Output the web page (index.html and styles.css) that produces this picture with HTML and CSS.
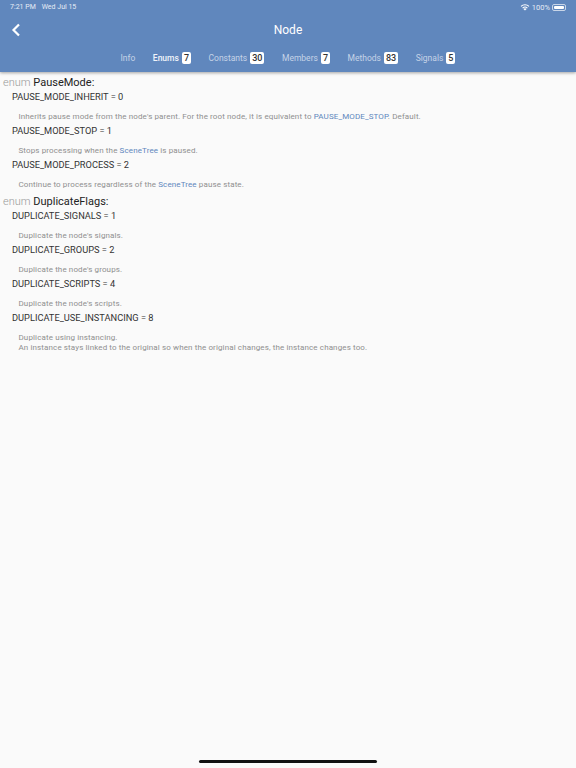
FILE: index.html
```html
<!DOCTYPE html>
<html lang="en">
<head>
	<meta charset="UTF-8">
	<title>Node</title>
	<link rel="stylesheet" href="styles.css">
</head>
<body>

<div id="outer">
	<div class="header">
		<div class="status">
			<span class="time">7:21 PM</span>
			<span class="date">Wed Jul 15</span>
			<span class="status-right">
				<svg class="wifi" width="10" height="8" viewBox="0 0 10 8">
					<path d="M5 7.6 3.4 5.9a2.3 2.3 0 0 1 3.2 0z" fill="#fff"/>
					<path d="M2.6 5.1a3.5 3.5 0 0 1 4.8 0" fill="none" stroke="#fff" stroke-width="1.1"/>
					<path d="M1 3.4a5.8 5.8 0 0 1 8 0" fill="none" stroke="#fff" stroke-width="1.1"/>
				</svg>
				<span>100%</span>
				<span class="battery"><span class="battery-fill"></span></span>
			</span>
		</div>
		<div class="title-row">
			<svg class="back" width="10" height="14" viewBox="0 0 10 14">
				<path d="M8 1.5 2.5 7 8 12.5" fill="none" stroke="#fff" stroke-width="2.2"/>
			</svg>
			<span class="title">Node</span>
		</div>
		<div class="tabs">
			<span class="tab">Info</span>
			<span class="tab active">Enums <b class="count">7</b></span>
			<span class="tab">Constants <b class="count">30</b></span>
			<span class="tab">Members <b class="count">7</b></span>
			<span class="tab">Methods <b class="count">83</b></span>
			<span class="tab">Signals <b class="count">5</b></span>
		</div>
	</div>

	<div class="content">
		<h2 class="enum"><span class="kw">enum</span> PauseMode:</h2>
		<div class="item">
			<div class="name">PAUSE_MODE_INHERIT = 0</div>
			<p class="desc">Inherits pause mode from the node's parent. For the root node, it is equivalent to <a href="#">PAUSE_MODE_STOP</a>. Default.</p>
		</div>
		<div class="item">
			<div class="name">PAUSE_MODE_STOP = 1</div>
			<p class="desc">Stops processing when the <a href="#">SceneTree</a> is paused.</p>
		</div>
		<div class="item">
			<div class="name">PAUSE_MODE_PROCESS = 2</div>
			<p class="desc">Continue to process regardless of the <a href="#">SceneTree</a> pause state.</p>
		</div>

		<h2 class="enum second"><span class="kw">enum</span> DuplicateFlags:</h2>
		<div class="item">
			<div class="name">DUPLICATE_SIGNALS = 1</div>
			<p class="desc">Duplicate the node's signals.</p>
		</div>
		<div class="item">
			<div class="name">DUPLICATE_GROUPS = 2</div>
			<p class="desc">Duplicate the node's groups.</p>
		</div>
		<div class="item">
			<div class="name">DUPLICATE_SCRIPTS = 4</div>
			<p class="desc">Duplicate the node's scripts.</p>
		</div>
		<div class="item">
			<div class="name">DUPLICATE_USE_INSTANCING = 8</div>
			<p class="desc">Duplicate using instancing.<br>An instance stays linked to the original so when the original changes, the instance changes too.</p>
		</div>
	</div>

	<div class="home-bar"></div>
</div>

</body>
</html>
```

FILE: styles.css
```css
*{
	margin: 0;
	padding: 0;
	box-sizing: border-box;
}
body{
	font-family: Roboto, "Liberation Sans", sans-serif;
	background-color: #fafafa;
}
#outer{
	width: 576px;
	height: 768px;
	display: flex;
	flex-direction: column;
	overflow: hidden;
}

.header{
	height: 72px;
	background-color: #6087bd;
	color: #fff;
	box-shadow: 0 1px 3px rgba(0,0,0,0.35);
	flex-shrink: 0;
}
.status{
	height: 14px;
	padding: 0 10px 0 10px;
	display: flex;
	align-items: center;
	font-size: 7px;
	color: #e6ecf5;
}
.date{
	margin-left: 6px;
}
.status-right{
	margin-left: auto;
	display: flex;
	align-items: center;
	gap: 2px;
	font-size: 7.5px;
}
.battery{
	width: 14px;
	height: 7px;
	padding: 1px;
	border: 1px solid #c9d6e8;
	border-radius: 2px;
	display: flex;
}
.battery-fill{
	flex: 1;
	background-color: #fff;
	border-radius: 1px;
}

.title-row{
	height: 30px;
	padding-top: 2px;
	display: flex;
	align-items: center;
	justify-content: center;
	position: relative;
}
.back{
	position: absolute;
	left: 11px;
	top: 9px;
}
.title{
	font-size: 12px;
}

.tabs{
	height: 28px;
	display: flex;
	align-items: center;
	justify-content: center;
	gap: 17.5px;
	font-size: 8.5px;
	color: #c5d3e7;
}
.tab{
	display: flex;
	align-items: center;
	gap: 3px;
}
.active{
	color: #f0f4fa;
	font-weight: 500;
}
.count{
	background-color: #fff;
	color: #333;
	font-weight: 500;
	font-size: 9px;
	padding: 0 2px;
	height: 12px;
	line-height: 12px;
	border-radius: 2px;
}

.content{
	flex: 1;
	padding: 3px 3px 0;
}
.enum{
	font-size: 11px;
	line-height: 15px;
	font-weight: 400;
	color: #222;
}
.second{
	margin-top: 2px;
}
.kw{
	color: #999;
	font-weight: 300;
}
.item{
	padding-left: 9px;
}
.name{
	font-size: 9.25px;
	line-height: 14px;
	color: #333;
}
.desc{
	margin-top: 8px;
	padding-left: 6.5px;
	padding-bottom: 2px;
	font-size: 8px;
	line-height: 10px;
	letter-spacing: 0.12px;
	color: #8f8f8f;
}
.desc a{
	color: #6087bd;
	text-decoration: none;
}

.home-bar{
	width: 178px;
	height: 3px;
	margin: 0 auto 5px;
	background-color: #111;
	border-radius: 2px;
}
```
